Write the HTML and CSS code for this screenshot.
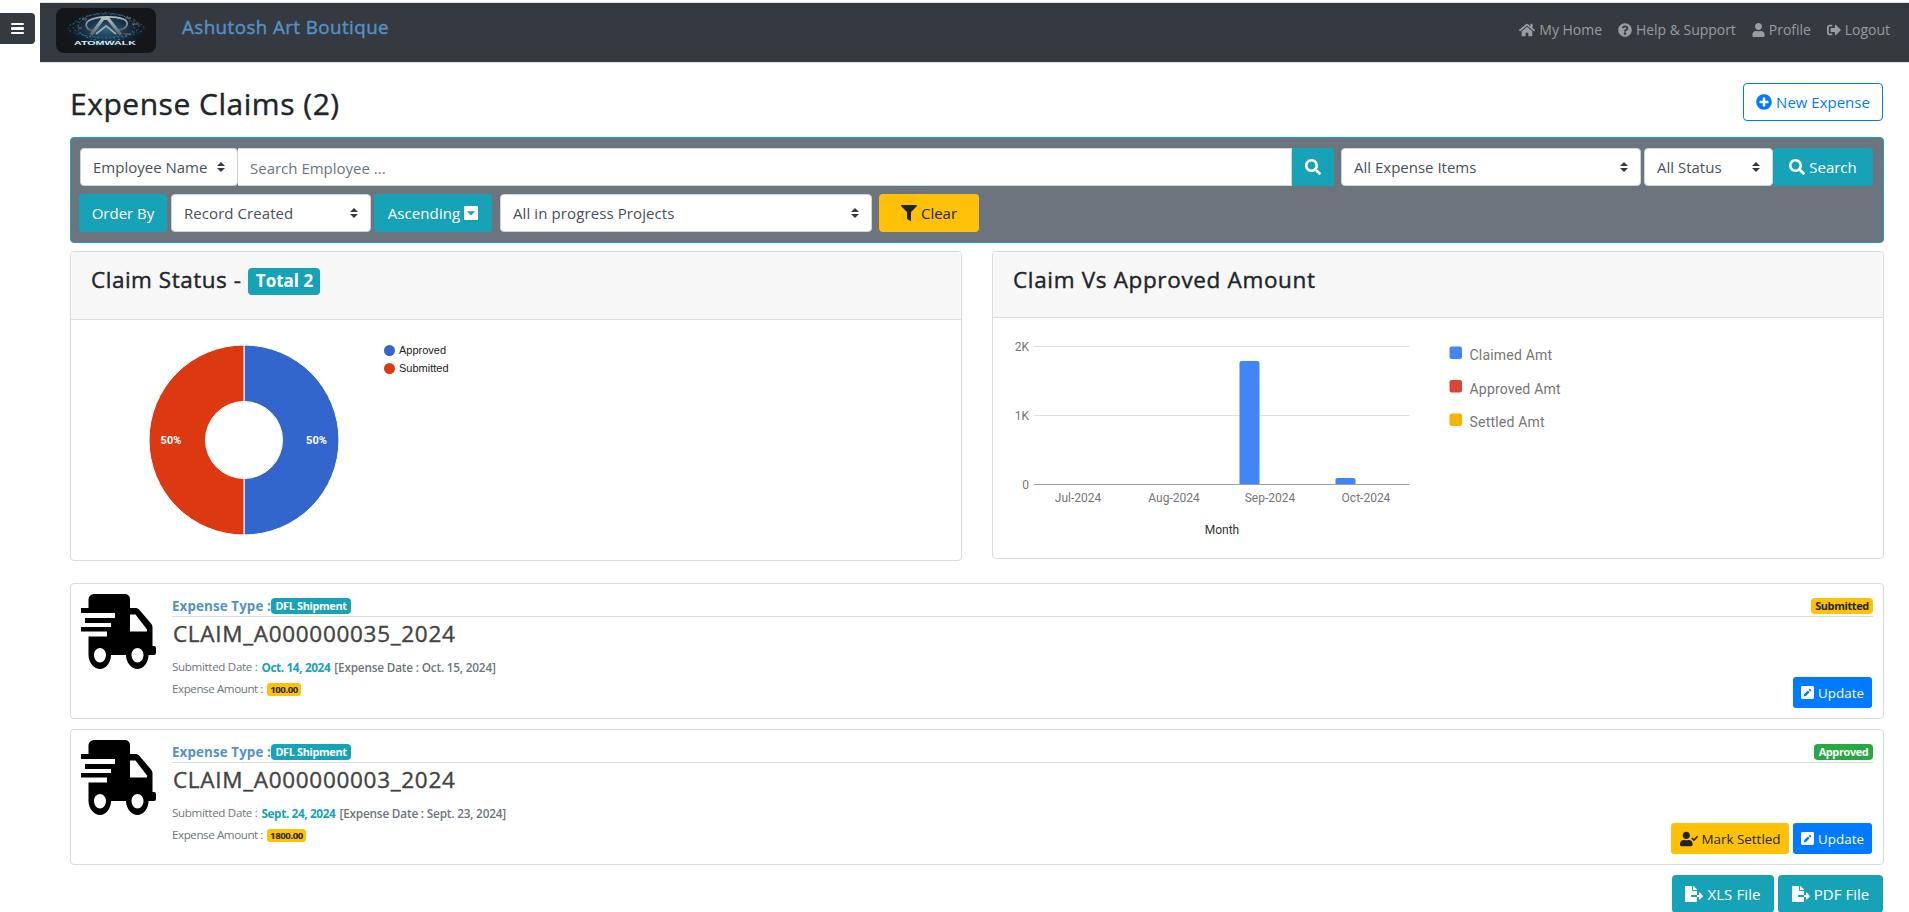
FILE: index.html
```html
<!DOCTYPE html>
<html lang="en">
<head>
<meta charset="utf-8">
<title>Expense Claims</title>
<link rel="stylesheet" href="styles.css">
</head>
<body>
<svg width="0" height="0" class="sprite">
  <defs>
    <symbol id="home" viewBox="0 0 576 512"><path d="M280.37 148.26L96 300.11V464a16 16 0 0 0 16 16l112.06-.29a16 16 0 0 0 15.92-16V368a16 16 0 0 1 16-16h64a16 16 0 0 1 16 16v95.64a16 16 0 0 0 16 16.05L464 480a16 16 0 0 0 16-16V300L295.67 148.26a12.19 12.19 0 0 0-15.3 0zM571.6 251.47L488 182.56V44.05a12 12 0 0 0-12-12h-56a12 12 0 0 0-12 12v72.61L318.47 43a48 48 0 0 0-61 0L4.34 251.47a12 12 0 0 0-1.6 16.9l25.5 31A12 12 0 0 0 45.15 301l235.22-193.74a12.19 12.19 0 0 1 15.3 0L530.9 301a12 12 0 0 0 16.9-1.6l25.5-31a12 12 0 0 0-1.7-16.93z"/></symbol>
    <symbol id="question" viewBox="0 0 512 512"><path d="M504 256c0 136.997-111.043 248-248 248S8 392.997 8 256C8 119.083 119.043 8 256 8s248 111.083 248 248zM262.655 90c-54.497 0-89.255 22.957-116.549 63.758-3.536 5.286-2.353 12.415 2.715 16.258l34.699 26.31c5.205 3.947 12.621 3.008 16.665-2.122 17.864-22.658 30.113-35.797 57.303-35.797 20.429 0 45.698 13.148 45.698 32.958 0 14.976-12.363 22.667-32.534 33.976C247.128 238.528 216 254.941 216 296v4c0 6.627 5.373 12 12 12h56c6.627 0 12-5.373 12-12v-1.333c0-28.462 83.186-29.647 83.186-106.667 0-58.002-60.165-102-116.531-102zM256 338c-25.365 0-46 20.635-46 46 0 25.364 20.635 46 46 46s46-20.636 46-46c0-25.365-20.635-46-46-46z"/></symbol>
    <symbol id="user" viewBox="0 0 448 512"><path d="M224 256c70.7 0 128-57.3 128-128S294.7 0 224 0 96 57.3 96 128s57.3 128 128 128zm89.6 32h-16.7c-22.2 10.2-46.9 16-72.9 16s-50.6-5.8-72.9-16h-16.7C60.2 288 0 348.2 0 422.4V464c0 26.5 21.5 48 48 48h352c26.5 0 48-21.5 48-48v-41.6c0-74.2-60.2-134.4-134.4-134.4z"/></symbol>
    <symbol id="usercheck" viewBox="0 0 640 512"><path d="M224 256c70.7 0 128-57.3 128-128S294.7 0 224 0 96 57.3 96 128s57.3 128 128 128zm89.6 32h-16.7c-22.2 10.2-46.9 16-72.9 16s-50.6-5.8-72.9-16h-16.7C60.2 288 0 348.2 0 422.4V464c0 26.5 21.5 48 48 48h352c26.5 0 48-21.5 48-48v-41.6c0-74.2-60.2-134.4-134.4-134.4z"/><path d="M418 220l78 78 128-138" fill="none" stroke="currentColor" stroke-width="58"/></symbol>
    <symbol id="logout" viewBox="0 0 512 512"><path d="M497 273L329 441c-15 15-41 4.5-41-17v-96H152c-13.3 0-24-10.7-24-24v-96c0-13.3 10.7-24 24-24h136V88c0-21.4 25.9-32 41-17l168 168c9.3 9.4 9.3 24.6 0 34zM192 436v-40c0-6.6-5.4-12-12-12H96c-17.7 0-32-14.3-32-32V160c0-17.7 14.3-32 32-32h84c6.6 0 12-5.4 12-12V76c0-6.6-5.4-12-12-12H96c-53 0-96 43-96 96v192c0 53 43 96 96 96h84c6.6 0 12-5.4 12-12z"/></symbol>
    <symbol id="plus" viewBox="0 0 512 512"><path d="M256 8C119 8 8 119 8 256s111 248 248 248 248-111 248-248S393 8 256 8zm144 276c0 6.600-5.400 12-12 12h-92v92c0 6.600-5.400 12-12 12h-56c-6.600 0-12-5.400-12-12v-92h-92c-6.600 0-12-5.400-12-12v-56c0-6.600 5.400-12 12-12h92v-92c0-6.600 5.400-12 12-12h56c6.600 0 12 5.400 12 12v92h92c6.600 0 12 5.400 12 12v56z"/></symbol>
    <symbol id="search" viewBox="0 0 512 512"><path d="M505 442.7L405.3 343c-4.500-4.500-10.600-7-17-7H372c27.600-35.300 44-79.700 44-128C416 93.100 322.900 0 208 0S0 93.100 0 208s93.100 208 208 208c48.300 0 92.700-16.400 128-44v16.300c0 6.400 2.500 12.500 7 17l99.700 99.700c9.400 9.400 24.600 9.400 33.900 0l28.300-28.300c9.400-9.400 9.400-24.600.1-34zM208 336c-70.700 0-128-57.200-128-128 0-70.700 57.200-128 128-128 70.700 0 128 57.200 128 128 0 70.700-57.200 128-128 128z"/></symbol>
    <symbol id="filter" viewBox="0 0 512 512"><path d="M487.976 0H24.028C2.71 0-8.047 25.866 7.058 40.971L192 225.941V432c0 7.831 3.821 15.17 10.237 19.662l80 55.98C298.02 518.69 320 507.493 320 487.98V225.941l184.947-184.97C520.021 25.896 509.338 0 487.976 0z"/></symbol>
    <symbol id="caret" viewBox="0 0 4 5"><path d="M2 0L0 2h4zm0 5L0 3h4z"/></symbol>
    <symbol id="downbox" viewBox="0 0 14 14"><path fill-rule="evenodd" d="M1 0h12a1 1 0 0 1 1 1v12a1 1 0 0 1-1 1H1a1 1 0 0 1-1-1V1a1 1 0 0 1 1-1zM3 5.300l4 4.200 4-4.200z"/></symbol>
    <symbol id="pen" viewBox="0 0 14 14"><path fill-rule="evenodd" d="M1.500 0h11A1.500 1.500 0 0 1 14 1.500v11a1.500 1.500 0 0 1-1.500 1.500h-11A1.500 1.500 0 0 1 0 12.500v-11A1.500 1.500 0 0 1 1.500 0zM3.300 9l-.3 2.200 2.200-.3L9.300 6.700 7.500 4.900zM8.200 4.200L10 6l.9-.9c.3-.3.3-.6 0-.9l-.9-.9c-.3-.3-.6-.3-.9 0z"/></symbol>
    <symbol id="export" viewBox="0 0 576 512"><path d="M384 121.900c0-6.300-2.500-12.400-7-16.900L279.100 7c-4.500-4.500-10.600-7-17-7H256v128h128zM571 308l-95.700-96.400c-10.100-10.100-27.400-3-27.400 11.300V288h-64v64h64v65.200c0 14.300 17.300 21.400 27.400 11.300L571 332c6.600-6.600 6.600-17.400 0-24zm-379 28v-32c0-8.800 7.200-16 16-16h176V160H248c-13.200 0-24-10.800-24-24V0H24C10.700 0 0 10.700 0 24v464c0 13.300 10.700 24 24 24h336c13.300 0 24-10.700 24-24V352H208c-8.800 0-16-7.200-16-16z"/></symbol>
    <symbol id="truck" viewBox="0 0 75 75">
      <path fill-rule="evenodd" d="M14 0h30a5 5 0 0 1 5 5v9h5c2 0 3 .5 4.500 2L70 29.500c1 1.300 1.500 2.500 1.500 4V52h1.500a2 2 0 0 1 2 2v5a2 2 0 0 1-2 2h-5.500C67.500 69 62 75 56.500 75S45 69 45 61H30C30 69 24.500 75 19 75S7.500 69 7.500 61V42.500h18.500V37.500H0v-4.500h30v-4H4v-5h30v-5H0v-5h7.500V6c0-3.500 2-6 6.500-6zM49 20.500v17h17v-2L54.500 20.500zM19 54c-3.200 0-6 3-6 7s2.800 7.500 6 7.500 6-3.500 6-7.500-2.800-7-6-7zm37.500 0c-3.200 0-6 3-6 7s2.800 7.500 6 7.500 6-3.500 6-7.500-2.800-7-6-7z"/>
    </symbol>
    <radialGradient id="glow"><stop offset="0" stop-color="#2f5d78"/><stop offset=".55" stop-color="#152d42"/><stop offset="1" stop-color="#11151a" stop-opacity="0"/></radialGradient>
    <linearGradient id="steel" x2="0" y2="1"><stop offset="0" stop-color="#b4bfc4"/><stop offset="1" stop-color="#566269"/></linearGradient>
  </defs>
</svg>

<header class="topbar">
  <svg class="logo" viewBox="0 0 100 45">
    <rect width="100" height="45" rx="8" fill="#14161a"/>
    <ellipse cx="50" cy="22" rx="44" ry="22" fill="url(#glow)"/>
    <g fill="none" stroke="#3f85a8" stroke-width="1" stroke-dasharray="1 3 2 2">
      <ellipse cx="50" cy="18" rx="33" ry="12"/><ellipse cx="50" cy="19" rx="28" ry="14"/><ellipse cx="50" cy="20" rx="38" ry="9" stroke="#276386"/>
    </g>
    <path d="M26 11h5M69 10h6M76 16h7M22 20h4M68 26h6" stroke="#9c674b" stroke-width="1"/>
    <path d="M38 23c-9-1-10-8-4-11 8-4 25-4 33-1 7 3 5 10-5 11" fill="none" stroke="url(#steel)" stroke-width="1.800"/>
    <path d="M35 27L47 10.500h5L65 27" fill="none" stroke="url(#steel)" stroke-width="3.200"/>
    <path d="M40 26l10-8 10 8" fill="none" stroke="#9aa8ae" stroke-width="1.800"/>
    <text x="18" y="37" class="logo-name" textLength="62" lengthAdjust="spacingAndGlyphs">ATOMWALK</text>
  </svg>
  <span class="brand">Ashutosh Art Boutique</span>
  <nav class="links">
    <a><svg class="w16"><use href="#home"/></svg><span>My Home</span></a>
    <a><svg class="w14"><use href="#question"/></svg><span>Help &amp; Support</span></a>
    <a><svg class="w12"><use href="#user"/></svg><span>Profile</span></a>
    <a><svg class="w14"><use href="#logout"/></svg><span>Logout</span></a>
  </nav>
</header>
<button class="menu"><i></i><i></i><i></i></button>

<main>
  <div class="titlebar">
    <h1><span>Expense Claims (2)</span></h1>
    <button class="btn outline"><svg class="w16"><use href="#plus"/></svg><span>New Expense</span></button>
  </div>

  <section class="filters">
    <div class="frow">
      <div class="select s-emp"><span>Employee Name</span><svg class="caret"><use href="#caret"/></svg></div>
      <div class="input"><span>Search Employee ...</span></div>
      <button class="btn info square"><svg class="w16"><use href="#search"/></svg></button>
      <div class="select s-items"><span>All Expense Items</span><svg class="caret"><use href="#caret"/></svg></div>
      <div class="select s-status"><span>All Status</span><svg class="caret"><use href="#caret"/></svg></div>
      <button class="btn info b-search"><svg class="w16"><use href="#search"/></svg><span>Search</span></button>
    </div>
    <div class="frow second">
      <button class="btn info b-order"><span>Order By</span></button>
      <div class="select s-record"><span>Record Created</span><svg class="caret"><use href="#caret"/></svg></div>
      <button class="btn info b-asc"><span>Ascending</span><svg class="w14"><use href="#downbox"/></svg></button>
      <div class="select s-proj"><span>All in progress Projects</span><svg class="caret"><use href="#caret"/></svg></div>
      <button class="btn warn b-clear"><svg class="w16"><use href="#filter"/></svg><span>Clear</span></button>
    </div>
  </section>

  <section class="charts">
    <article class="card">
      <h2 class="h-left"><span class="t-status">Claim Status -</span><b class="total"><span>Total 2</span></b></h2>
      <svg class="plot" width="890" height="240" viewBox="71 320 890 240">
        <path d="M244 345a95 95 0 0 1 0 190v-56.500a38.500 38.500 0 0 0 0-77z" fill="#3366cc" stroke="#fff"/>
        <path d="M244 345a95 95 0 0 0 0 190v-56.500a38.500 38.500 0 0 1 0-77z" fill="#dc3912" stroke="#fff"/>
        <g class="pct"><text x="171" y="444">50%</text><text x="316.500" y="444">50%</text></g>
        <circle cx="389.500" cy="350.500" r="5.500" fill="#3366cc"/><circle cx="389.500" cy="368.500" r="5.500" fill="#dc3912"/>
        <g class="pielegend"><text x="399" y="354">Approved</text><text x="399" y="372">Submitted</text></g>
      </svg>
    </article>
    <article class="card right">
      <h2 class="h-right"><span class="t-vs">Claim Vs Approved Amount</span></h2>
      <svg class="plot" width="890" height="240" viewBox="993 318 890 240">
        <path d="M1034 346.500h375.500M1034 415.500h375.500" stroke="#e0e0e0"/>
        <path d="M1239.500 484.500V363a2 2 0 0 1 2-2h16a2 2 0 0 1 2 2V484.500zM1335.500 484.500V480a2 2 0 0 1 2-2h16a2 2 0 0 1 2 2v4.500z" fill="#4285f4"/>
        <path d="M1034 484.500h375.500" stroke="#9e9e9e"/>
        <g class="axis end"><text x="1029" y="351">2K</text><text x="1029" y="420">1K</text><text x="1029" y="489">0</text></g>
        <g class="axis mid"><text x="1078" y="502">Jul-2024</text><text x="1174" y="502">Aug-2024</text><text x="1270" y="502">Sep-2024</text><text x="1366" y="502">Oct-2024</text><text x="1222" y="534" fill="#333">Month</text></g>
        <rect x="1449.500" y="346.500" width="12.500" height="12.500" rx="2" fill="#4285f4"/><rect x="1449.500" y="380" width="12.500" height="12.500" rx="2" fill="#db4437"/><rect x="1449.500" y="413.500" width="12.500" height="12.500" rx="2" fill="#f4b400"/>
        <g class="barlegend"><text x="1469.500" y="360">Claimed Amt</text><text x="1469.500" y="394">Approved Amt</text><text x="1469.500" y="427">Settled Amt</text></g>
      </svg>
    </article>
  </section>

  <section class="claim">
    <svg class="truck"><use href="#truck"/></svg>
    <div class="body">
      <div class="head"><span class="type">Expense Type :</span><b class="badge teal dfl"><span>DFL Shipment</span></b><b class="badge yellow state"><span>Submitted</span></b></div>
      <h3><span>CLAIM_A000000035_2024</span></h3>
      <p class="date"><span class="d0">Submitted Date :</span><b class="d1">Oct. 14, 2024</b><b class="d2">[Expense Date : Oct. 15, 2024]</b></p>
      <p class="amount"><span>Expense Amount :</span><b class="badge yellow sm">100.00</b></p>
    </div>
    <div class="actions"><button class="btn primary small"><svg class="w13"><use href="#pen"/></svg><span>Update</span></button></div>
  </section>

  <section class="claim">
    <svg class="truck"><use href="#truck"/></svg>
    <div class="body">
      <div class="head"><span class="type">Expense Type :</span><b class="badge teal dfl"><span>DFL Shipment</span></b><b class="badge green state"><span>Approved</span></b></div>
      <h3><span>CLAIM_A000000003_2024</span></h3>
      <p class="date"><span class="d0">Submitted Date :</span><b class="d1">Sept. 24, 2024</b><b class="d2">[Expense Date : Sept. 23, 2024]</b></p>
      <p class="amount"><span>Expense Amount :</span><b class="badge yellow sm wide">1800.00</b></p>
    </div>
    <div class="actions"><button class="btn warn small settle"><svg class="w18"><use href="#usercheck"/></svg><span>Mark Settled</span></button><button class="btn primary small"><svg class="w13"><use href="#pen"/></svg><span>Update</span></button></div>
  </section>

  <div class="exports">
    <button class="btn info b-xls"><svg class="w18"><use href="#export"/></svg><span>XLS File</span></button>
    <button class="btn info b-pdf"><svg class="w18"><use href="#export"/></svg><span>PDF File</span></button>
  </div>
</main>
</body>
</html>
```
FILE: styles.css
```css
* { box-sizing: border-box; }
html, body { height: 912px; overflow: hidden; }
body {
  margin: 0;
  padding-top: 2px;
  background: #fff;
  color: #212529;
  font-family: "Open Sans", "Noto Sans", sans-serif;
  font-size: 15px;
}
h1, h2, h3, p { margin: 0; font-weight: 500; white-space: nowrap; }
h1, h2, h3, .brand { -webkit-text-stroke: .4px currentColor; }
.total { -webkit-text-stroke: 0; }
svg { fill: currentColor; flex: none; display: block; }
.sprite { position: absolute; }
.w12 { width: 13px; height: 14px; }
.w13 { width: 13px; height: 13px; }
.w14 { width: 14px; height: 14px; }
.w16 { width: 16px; height: 16px; }
.w18 { width: 18px; height: 16px; }

.topbar {
  display: flex;
  height: 61px;
  margin-left: 40px;
  padding: 5px 19px 0 16px;
  background: #343a40;
  border-top: 1px solid #dee2e6;
  border-bottom: 1px solid #dee2e6;
}
.logo { width: 100px; height: 45px; }
.logo-name { font: bold 5px "Liberation Sans", sans-serif; fill: #d6eaf3; }
.brand {
  margin-left: 26px;
  height: 38px;
  line-height: 38px;
  font-size: 18.8px;
  font-weight: 500;
  letter-spacing: .42px;
  color: #5592c4;
  white-space: nowrap;
}
.links { display: flex; gap: 16px; margin-left: auto; height: 43px; align-items: center; color: #9a9c9f; font-size: 14px; letter-spacing: -.03px; }
.links a { display: flex; align-items: center; gap: 4px; white-space: nowrap; }
.menu {
  position: absolute;
  left: 0;
  top: 13px;
  width: 35px;
  height: 31px;
  padding: 10px 11px;
  border: 0;
  border-radius: 0 4px 4px 0;
  background: #343a40;
  display: flex;
  flex-direction: column;
  gap: 2px;
}
.menu i { display: block; height: 3px; width: 13px; background: #fff; border-radius: 1px; }

main { padding: 20px 25px 0 70px; }
.titlebar { display: flex; justify-content: space-between; height: 54px; }
h1 { font-size: 30px; line-height: 41px; letter-spacing: .52px; }

.btn {
  display: flex;
  align-items: center;
  justify-content: center;
  gap: 4px;
  height: 38px;
  padding: 0;
  border: 0;
  border-radius: 4px;
  color: #fff;
  font-family: inherit;
  font-size: 15px;
  white-space: nowrap;
  flex: none;
}
.outline { width: 140px; margin-right: 1px; border: 1px solid #007bff; background: #fff; color: #007bff; }
.info { background: #17a2b8; }
.warn { background: #ffc107; color: #212529; }
.primary { background: #007bff; }
.small { height: 31px; width: 79px; border-radius: 3px; font-size: 13.4px; }
.settle { width: 118px; }

.filters {
  height: 106px;
  padding: 10px 10px 0 8px;
  border: 1px solid #17a2b8;
  border-radius: 4px;
  background: #6c757d;
}
.frow { display: flex; padding-left: 1px; }
.second { padding-left: 0; margin-top: 8px; }
.select, .input {
  display: flex;
  align-items: center;
  justify-content: space-between;
  height: 38px;
  padding: 0 12px;
  border: 1px solid #ced4da;
  border-radius: 4px;
  background: #fff;
  color: #495057;
  white-space: nowrap;
}
.input { flex: 1; border-radius: 0; color: #6c757d; border-left: 0; padding-top: 2px; }
.caret { width: 8px; height: 10px; color: #343a40; }
.s-emp { width: 158px; }
.square { width: 42px; border-radius: 0; }
.s-items { width: 300px; margin-left: 7px; }
.s-status { width: 129px; margin-left: 3px; }
.b-search { width: 100px; }
.b-order { width: 88px; }
.s-record { width: 200px; margin-left: 4px; letter-spacing: .07px; }
.b-asc { width: 118px; margin-left: 3px; letter-spacing: .1px; }
.s-proj { width: 372px; margin-left: 8px; letter-spacing: .1px; }
.b-clear { width: 100px; margin-left: 7px; }

.charts { display: flex; gap: 30px; margin-top: 8px; height: 332px; align-items: flex-start; }
.card { flex: 1; height: 310px; border: 1px solid #dcdcdc; border-radius: 4px; overflow: hidden; }
.right { height: 308px; }
.card h2 { display: flex; align-items: flex-start; padding: 10px 20px 0; height: 68px; background: #f7f7f7; border-bottom: 1px solid #dcdcdc; font-size: 22.500px; line-height: 35px; }
.t-status { letter-spacing: .52px; }
.t-vs { letter-spacing: .66px; }
.card .h-right { height: 66px; }
.total { margin: 6px 0 0 7px; width: 72px; height: 27px; line-height: 26px; text-align: center; border-radius: 4px; background: #17a2b8; color: #fff; font-size: 17px; font-weight: 700; }
.pct { font: bold 11px Roboto, sans-serif; fill: #fff; text-anchor: middle; }
.pielegend { font: 11px "Liberation Sans", sans-serif; fill: #222; }
.axis { font: 12px Roboto, sans-serif; fill: #757575; }
.end { text-anchor: end; }
.mid { text-anchor: middle; }
.barlegend { font: 14px Roboto, sans-serif; letter-spacing: .2px; fill: #757575; }

.claim { display: flex; position: relative; height: 136px; margin-bottom: 10px; padding: 10px; border: 1px solid #dcdcdc; border-radius: 4px; }
.truck { width: 75px; height: 75px; color: #000; }
.body { flex: 1; margin-left: 16px; }
.head { display: flex; height: 23px; padding-top: 4px; border-bottom: 1px solid #dcdcdc; }
.type { width: 99px; line-height: 16px; font-size: 13.400px; letter-spacing: .1px; font-weight: 700; color: #5592c4; white-space: nowrap; }
.badge { display: block; height: 16px; line-height: 16px; border-radius: 4px; text-align: center; font-size: 10.900px; letter-spacing: -.35px; font-weight: 700; white-space: nowrap; }
.teal { background: #17a2b8; color: #fff; }
.yellow { background: #ffc107; color: #212529; }
.green { background: #28a745; color: #fff; width: 59px; }
.dfl { width: 80px; }
.state { margin-left: auto; }
.yellow.state { width: 62px; }
h3 { margin: 1px 0 0 1px; font-size: 22.500px; line-height: 32px; letter-spacing: .7px; color: #444; }
.date { display: flex; gap: 4px; margin-top: 8px; line-height: 18px; font-size: 11.800px; font-weight: 400; letter-spacing: -.2px; color: #6c757d; }
.d0 { font-size: 11.600px; letter-spacing: -.33px; }
.d1 { color: #17a2b8; font-weight: 700; letter-spacing: -.38px; }
.d2 { font-weight: 600; letter-spacing: -.2px; }
.amount { display: flex; gap: 4px; margin-top: 4px; line-height: 18px; font-size: 11.600px; letter-spacing: -.42px; font-weight: 400; color: #6c757d; }
.sm { width: 34px; height: 13px; line-height: 13px; margin-top: 3px; font-size: 9.600px; letter-spacing: -.4px; border-radius: 3px; }
.wide { width: 39px; }
.actions { position: absolute; right: 11px; bottom: 10px; display: flex; gap: 4px; }
.exports { display: flex; justify-content: flex-end; gap: 4px; padding-right: 1px; }
.b-xls { width: 102px; letter-spacing: .1px; }
.b-pdf { width: 105px; }
```
